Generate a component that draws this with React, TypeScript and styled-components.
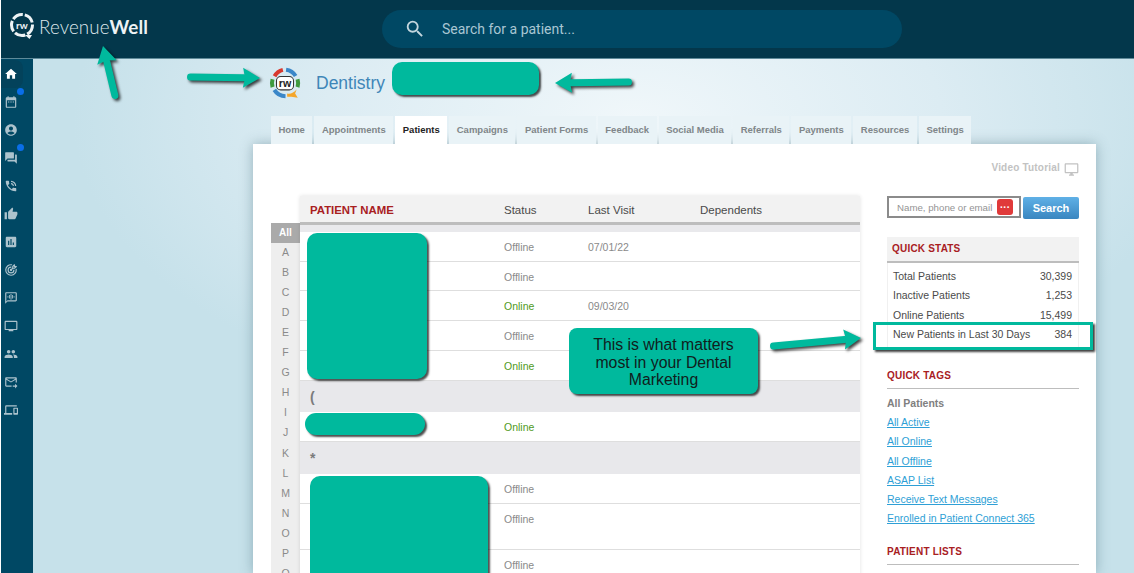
import styled, { createGlobalStyle } from "styled-components";
import {
  MdHome,
  MdDateRange,
  MdAccountCircle,
  MdQuestionAnswer,
  MdPhoneInTalk,
  MdThumbUp,
  MdAssessment,
  MdVoiceChat,
  MdPersonalVideo,
  MdPeople,
  MdForwardToInbox,
  MdDevices,
  MdSearch,
  MdOutlineDesktopWindows,
} from "react-icons/md";
import { TbTargetArrow } from "react-icons/tb";

const TEAL = "#00b99d";

const GlobalStyle = createGlobalStyle`
  html, body {
    margin: 0;
    padding: 0;
    height: 100%;
    overflow: hidden;
    background: #fff;
    font-family: "Liberation Sans", Arial, sans-serif;
  }
`;

const Page = styled.div`
  position: relative;
  width: 1134px;
  height: 573px;
  overflow: hidden;
  display: flex;
  flex-direction: column;
  padding-left: 1px;
  box-sizing: border-box;
`;

const TopBar = styled.header`
  flex: 0 0 59px;
  display: flex;
  align-items: center;
  background: #03374b;
  border-bottom: 1px solid #5f8a99;
  box-sizing: border-box;
  height: 59px;
`;

const Brand = styled.div`
  width: 381px;
  display: flex;
  align-items: center;
  gap: 3px;
  padding: 0 0 6px 7px;
  box-sizing: border-box;
`;

const BrandName = styled.span`
  font-family: Lato, sans-serif;
  font-size: 18.8px;
  font-weight: 300;
  color: #dfe8ec;
  letter-spacing: 0.1px;

  b {
    font-weight: 700;
    color: #eef3f5;
  }
`;

const SearchPill = styled.div`
  width: 520px;
  height: 38px;
  border-radius: 19px;
  background: #004864;
  display: flex;
  align-items: center;
  gap: 16px;
  padding-left: 22px;
  box-sizing: border-box;
  color: #c3d6de;
  font-family: Roboto, sans-serif;
  font-size: 14px;

  span {
    color: #a9c6d3;
  }
`;

const Body = styled.div`
  flex: 1;
  display: flex;
  min-height: 0;
`;

const SideNav = styled.nav`
  flex: 0 0 32px;
  background: #004864;
  display: flex;
  flex-direction: column;
  padding-top: 1px;
  box-sizing: border-box;
`;

const NavItem = styled.div<{ $active?: boolean; $dot?: boolean }>`
  position: relative;
  width: 22px;
  height: 28px;
  padding-right: 2px;
  box-sizing: border-box;
  display: flex;
  align-items: center;
  justify-content: center;
  font-size: 14px;
  color: ${(p) => (p.$active ? "#fff" : "#adc3cd")};
  background: ${(p) => (p.$active ? "#03425b" : "transparent")};
  border-radius: 0 8px 8px 0;

  &::after {
    content: "";
    display: ${(p) => (p.$dot ? "block" : "none")};
    position: absolute;
    top: 0;
    right: -1px;
    width: 7px;
    height: 7px;
    border-radius: 50%;
    background: #0a6ee8;
  }
`;

const Main = styled.main`
  flex: 1;
  min-width: 0;
  padding-left: 220px;
  background: radial-gradient(
    ellipse 560px 300px at 600px 60px,
    #f0f7fa 0%,
    #dcecf3 55%,
    #c6e1ea 100%
  );
`;

const Content = styled.div`
  width: 843px;
`;

const OfficeHeader = styled.div`
  height: 57px;
  display: flex;
  align-items: flex-start;
  gap: 15px;
  padding: 8px 0 0 16px;
  box-sizing: border-box;
`;

const OfficeName = styled.h1`
  margin: 6px 0 0;
  font-size: 17.5px;
  font-weight: 400;
  color: #3f86b8;
`;

const Tabs = styled.div`
  display: flex;
  gap: 2px;
  height: 28px;
  padding-left: 18px;
`;

const Tab = styled.div<{ $active?: boolean }>`
  display: flex;
  align-items: center;
  padding: 0 7.5px 1px;
  font-size: 9.5px;
  font-weight: 700;
  color: ${(p) => (p.$active ? "#222" : "#808689")};
  background: ${(p) => (p.$active ? "#fff" : "#e9f3f7")};
`;

const Panel = styled.section`
  height: 430px;
  background: #fff;
  box-shadow: 0 0 12px rgba(70, 110, 125, 0.45);
  padding: 0 17px 0 18px;
  box-sizing: border-box;
  overflow: hidden;
`;

const TutorialRow = styled.div`
  height: 52px;
  display: flex;
  justify-content: flex-end;
  align-items: flex-start;
  gap: 4px;
  padding-top: 18px;
  box-sizing: border-box;
  font-size: 10px;
  font-weight: 700;
  letter-spacing: 0.2px;
  color: #c2c2c2;
`;

const Columns = styled.div`
  display: grid;
  grid-template-columns: 589px 192px;
  justify-content: space-between;
`;

const Listing = styled.div`
  display: grid;
  grid-template-columns: 29px 560px;
`;

const AlphaList = styled.ul`
  list-style: none;
  margin: 27px 0 0;
  padding: 0;
  background: #eeeeee;
`;

const AlphaItem = styled.li<{ $active?: boolean }>`
  height: 20.05px;
  line-height: 19px;
  text-align: center;
  font-size: ${(p) => (p.$active ? "10px" : "10.5px")};
  font-weight: ${(p) => (p.$active ? 700 : 400)};
  color: ${(p) => (p.$active ? "#fff" : "#8a8a8a")};
  background: ${(p) => (p.$active ? "#aaaaaa" : "transparent")};
`;

const Table = styled.div`
  box-shadow: 0 0 4px rgba(0, 0, 0, 0.12);
`;

const tableCols = "204px 84px 112px 1fr";

const TableHead = styled.div`
  display: grid;
  grid-template-columns: ${tableCols};
  height: 29px;
  align-items: center;
  background: #f2f2f2;
  border-bottom: 3px solid #bdbdbd;
  box-sizing: border-box;
  font-size: 11.5px;
  color: #4a4a4a;
  padding-top: 1px;
`;

const NameHead = styled.span`
  padding-left: 10px;
  font-size: 11.4px;
  font-weight: 700;
  color: #a8201f;
`;

const TopBand = styled.div`
  height: 7px;
  background: #e9e9ec;
`;

const Row = styled.div<{ $h: number }>`
  display: grid;
  grid-template-columns: ${tableCols};
  height: ${(p) => p.$h}px;
  padding-top: 8px;
  box-sizing: border-box;
  border-bottom: 1px solid #dedede;
  font-size: 10.5px;
  line-height: 14px;
  color: #8a8a8a;
`;

const Status = styled.span<{ $online?: boolean }>`
  color: ${(p) => (p.$online ? "#4f9a1c" : "#8a8a8a")};
`;

const GroupRow = styled.div<{ $h: number }>`
  height: ${(p) => p.$h}px;
  background: #e8e8eb;
  padding: 8px 0 0 10px;
  box-sizing: border-box;
  font-size: 14px;
  font-weight: 700;
  line-height: 16px;
  color: #7b7b7b;
`;

const SideColumn = styled.aside`
  font-size: 11px;
  color: #4a4a4a;
`;

const FinderRow = styled.div`
  display: flex;
  gap: 2px;
  height: 23px;
`;

const FinderInput = styled.div`
  width: 134px;
  height: 22px;
  border: 2px solid #8b8b8b;
  box-sizing: border-box;
  display: flex;
  align-items: center;
  justify-content: space-between;
  padding: 0 6px 0 8px;
  font-size: 9.7px;
  color: #949494;
`;

const DotsBadge = styled.span`
  width: 16px;
  height: 16px;
  border-radius: 3px;
  background: #e03a3a;
  color: #fff;
  font-size: 10px;
  font-weight: 700;
  line-height: 12px;
  text-align: center;
  letter-spacing: 0.5px;
`;

const SearchButton = styled.div`
  width: 56px;
  height: 22px;
  margin-top: 1px;
  border-radius: 2px;
  background: linear-gradient(#5fb0e6, #3a86c0);
  color: #fff;
  font-size: 11px;
  font-weight: 700;
  line-height: 22px;
  text-align: center;
`;

const StatsHead = styled.h3`
  margin: 18px 0 0;
  height: 26px;
  padding-left: 5px;
  background: #f2f2f2;
  border-bottom: 2px solid #bdbdbd;
  box-sizing: border-box;
  font-size: 10px;
  line-height: 24px;
  letter-spacing: 0.2px;
  color: #a8201f;
`;

const StatsBody = styled.div`
  padding: 4px 6px 0 5px;
  height: 86px;
  box-sizing: border-box;
  border-left: 1px solid #f0f0f0;
  border-right: 1px solid #f0f0f0;
`;

const StatRow = styled.div`
  display: flex;
  justify-content: space-between;
  height: 19.4px;
  line-height: 19.4px;
  font-size: 10.5px;
`;

const SectionTitle = styled.h3`
  margin: 20px 0 0;
  padding-bottom: 6px;
  border-bottom: 1px solid #bdbdbd;
  font-size: 10px;
  line-height: 13px;
  letter-spacing: 0.2px;
  color: #a8201f;
`;

const TagList = styled.div`
  display: flex;
  flex-direction: column;
  padding-top: 5px;
  margin-bottom: -3px;
`;

const CurrentTag = styled.span`
  height: 19.2px;
  line-height: 19.2px;
  font-size: 10.5px;
  font-weight: 700;
  color: #808080;
`;

const TagLink = styled.a`
  height: 19.2px;
  line-height: 19.2px;
  font-size: 10.5px;
  color: #2e9fd6;
  text-decoration: underline;
`;

const Redaction = styled.div<{ $x: number; $y: number; $w: number; $h: number; $r: number }>`
  position: absolute;
  left: ${(p) => p.$x}px;
  top: ${(p) => p.$y}px;
  width: ${(p) => p.$w}px;
  height: ${(p) => p.$h}px;
  border-radius: ${(p) => p.$r}px;
  background: ${TEAL};
  box-shadow: 2px 2px 2px rgba(0, 0, 0, 0.7);
`;

const Callout = styled.div`
  position: absolute;
  left: 569px;
  top: 328px;
  width: 189px;
  height: 66px;
  padding: 8px 18px 0;
  box-sizing: border-box;
  border-radius: 8px;
  background: ${TEAL};
  box-shadow: 2px 2px 2px rgba(0, 0, 0, 0.7);
  text-align: center;
  font-size: 15.8px;
  line-height: 17.5px;
  color: #10201c;
`;

const Highlight = styled.div`
  position: absolute;
  left: 873px;
  top: 322px;
  width: 220px;
  height: 28px;
  box-sizing: border-box;
  border: 3px solid ${TEAL};
  box-shadow: 2px 2px 2px rgba(0, 0, 0, 0.75);
`;

const ArrowLayer = styled.svg`
  position: absolute;
  inset: 0;
  pointer-events: none;
  filter: drop-shadow(2px 2px 1.5px rgba(0, 0, 0, 0.75));
`;

const navIcons = [
  { icon: <MdHome />, active: true },
  { icon: <MdDateRange />, dot: true },
  { icon: <MdAccountCircle /> },
  { icon: <MdQuestionAnswer />, dot: true },
  { icon: <MdPhoneInTalk /> },
  { icon: <MdThumbUp /> },
  { icon: <MdAssessment /> },
  { icon: <TbTargetArrow /> },
  { icon: <MdVoiceChat /> },
  { icon: <MdPersonalVideo /> },
  { icon: <MdPeople /> },
  { icon: <MdForwardToInbox /> },
  { icon: <MdDevices /> },
];

const tabs = [
  "Home",
  "Appointments",
  "Patients",
  "Campaigns",
  "Patient Forms",
  "Feedback",
  "Social Media",
  "Referrals",
  "Payments",
  "Resources",
  "Settings",
];

const letters = "ABCDEFGHIJKLMNOPQ".split("");

const rows = [
  { h: 29.5, status: "Offline", last: "07/01/22" },
  { h: 29.5, status: "Offline", last: "" },
  { h: 30, status: "Online", last: "09/03/20" },
  { h: 30, status: "Offline", last: "" },
  { h: 30, status: "Online", last: "" },
  { group: "(", h: 31 },
  { h: 30, status: "Online", last: "" },
  { group: "*", h: 32 },
  { h: 30, status: "Offline", last: "" },
  { h: 46, status: "Offline", last: "" },
  { h: 30, status: "Offline", last: "" },
];

const stats = [
  ["Total Patients", "30,399"],
  ["Inactive Patients", "1,253"],
  ["Online Patients", "15,499"],
  ["New Patients in Last 30 Days", "384"],
];

const tagLinks = [
  "All Active",
  "All Online",
  "All Offline",
  "ASAP List",
  "Receive Text Messages",
  "Enrolled in Patient Connect 365",
];

const Arrow = ({ x1, y1, x2, y2 }: { x1: number; y1: number; x2: number; y2: number }) => {
  const len = Math.hypot(x2 - x1, y2 - y1);
  const angle = (Math.atan2(y2 - y1, x2 - x1) * 180) / Math.PI;
  return (
    <g transform={`translate(${x1} ${y1}) rotate(${angle})`} fill={TEAL}>
      <rect x={-3} y={-3.5} width={len - 10} height={7} rx={3.5} />
      <path d={`M${len} 0 L${len - 17} -10 L${len - 15} 0 L${len - 17} 10 Z`} />
    </g>
  );
};

const WhiteLogo = () => (
  <svg width="28" height="30" viewBox="0 0 28 30">
    <circle
      cx="14"
      cy="14"
      r="10.5"
      fill="none"
      stroke="#eef3f5"
      strokeWidth="3"
      strokeDasharray="11 2"
    />
    <path d="M17 24 L24 24 L21.5 28 Z" fill="#eef3f5" />
    <text x="14" y="17.5" textAnchor="middle" fontFamily="Lato, sans-serif" fontSize="10" fontWeight="700" fill="#eef3f5">
      rw
    </text>
  </svg>
);

const ColorLogo = () => (
  <svg width="32" height="33" viewBox="0 0 30 31">
    <g fill="none" strokeWidth="3.8">
      <path d="M5.2 8.6 A12.5 12.5 0 0 1 13 2.7" stroke="#d8392f" />
      <path d="M16 2.6 A12.5 12.5 0 0 1 25 8.5" stroke="#3b87c8" />
      <path d="M26.8 11.5 A12.5 12.5 0 0 1 26.8 19" stroke="#3f9a3f" />
      <path d="M3.3 11.5 A12.5 12.5 0 0 0 3.3 19" stroke="#3f9a3f" />
      <path d="M5 21.5 A12.5 12.5 0 0 0 15.5 27.5" stroke="#3b87c8" />
    </g>
    <path d="M17 25 Q22 26 26 21 L24.5 25 L27 29 L21 28 Q19 28 17 28 Z" fill="#f4a62a" />
    <rect x="7" y="9" width="16" height="12.5" rx="4" fill="#fff" stroke="#333" strokeWidth="1" />
    <text x="15" y="18.8" textAnchor="middle" fontFamily="'Liberation Sans', sans-serif" fontSize="10" fontWeight="700" fill="#222">
      rw
    </text>
  </svg>
);

export default function App() {
  return (
    <Page>
      <GlobalStyle />
      <TopBar>
        <Brand>
          <WhiteLogo />
          <BrandName>
            Revenue<b>Well</b>
          </BrandName>
        </Brand>
        <SearchPill>
          <MdSearch size={22} />
          <span>Search for a patient...</span>
        </SearchPill>
      </TopBar>

      <Body>
        <SideNav>
          {navIcons.map((item, i) => (
            <NavItem key={i} $active={item.active} $dot={item.dot}>
              {item.icon}
            </NavItem>
          ))}
        </SideNav>

        <Main>
          <Content>
            <OfficeHeader>
              <ColorLogo />
              <OfficeName>Dentistry</OfficeName>
            </OfficeHeader>

            <Tabs>
              {tabs.map((t) => (
                <Tab key={t} $active={t === "Patients"}>
                  {t}
                </Tab>
              ))}
            </Tabs>

            <Panel>
              <TutorialRow>
                Video Tutorial
                <MdOutlineDesktopWindows size={15} />
              </TutorialRow>

              <Columns>
                <Listing>
                  <AlphaList>
                    <AlphaItem $active>All</AlphaItem>
                    {letters.map((l) => (
                      <AlphaItem key={l}>{l}</AlphaItem>
                    ))}
                  </AlphaList>

                  <Table>
                    <TableHead>
                      <NameHead>PATIENT NAME</NameHead>
                      <span>Status</span>
                      <span>Last Visit</span>
                      <span>Dependents</span>
                    </TableHead>
                    <TopBand />
                    {rows.map((r, i) =>
                      r.group ? (
                        <GroupRow key={i} $h={r.h}>
                          {r.group}
                        </GroupRow>
                      ) : (
                        <Row key={i} $h={r.h}>
                          <span />
                          <Status $online={r.status === "Online"}>{r.status}</Status>
                          <span>{r.last}</span>
                          <span />
                        </Row>
                      )
                    )}
                  </Table>
                </Listing>

                <SideColumn>
                  <FinderRow>
                    <FinderInput>
                      Name, phone or email
                      <DotsBadge>...</DotsBadge>
                    </FinderInput>
                    <SearchButton>Search</SearchButton>
                  </FinderRow>

                  <StatsHead>QUICK STATS</StatsHead>
                  <StatsBody>
                    {stats.map(([label, value]) => (
                      <StatRow key={label}>
                        <span>{label}</span>
                        <span>{value}</span>
                      </StatRow>
                    ))}
                  </StatsBody>

                  <SectionTitle>QUICK TAGS</SectionTitle>
                  <TagList>
                    <CurrentTag>All Patients</CurrentTag>
                    {tagLinks.map((t) => (
                      <TagLink key={t}>{t}</TagLink>
                    ))}
                  </TagList>

                  <SectionTitle>PATIENT LISTS</SectionTitle>
                </SideColumn>
              </Columns>
            </Panel>
          </Content>
        </Main>
      </Body>

      <Redaction $x={392} $y={62} $w={147} $h={33} $r={10} />
      <Redaction $x={307} $y={233} $w={120} $h={146} $r={10} />
      <Redaction $x={305} $y={413} $w={120} $h={22} $r={11} />
      <Redaction $x={310} $y={476} $w={178} $h={110} $r={10} />
      <Highlight />
      <Callout>This is what matters most in your Dental Marketing</Callout>

      <ArrowLayer width="1134" height="573" viewBox="0 0 1134 573">
        <Arrow x1={115} y1={96} x2={103} y2={46} />
        <Arrow x1={190} y1={77} x2={260} y2={78} />
        <Arrow x1={629} y1={82} x2={555} y2={83} />
        <Arrow x1={773} y1={346} x2={861} y2={338} />
      </ArrowLayer>
    </Page>
  );
}
